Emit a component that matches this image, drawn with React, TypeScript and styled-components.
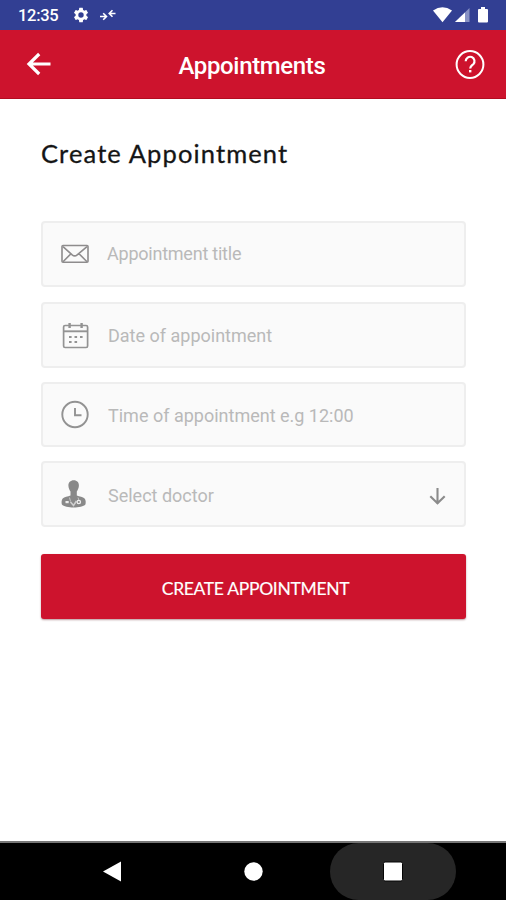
import React from "react";
import styled, { createGlobalStyle } from "styled-components";

const GlobalStyle = createGlobalStyle`
  * { box-sizing: border-box; }
  body { margin: 0; background: #fff; font-family: Roboto, sans-serif; }
  svg { display: block; flex: none; }
`;

const Screen = styled.div`
  width: 506px;
  height: 900px;
  display: flex;
  flex-direction: column;
  overflow: hidden;
  background: #fff;
`;

const StatusBar = styled.div`
  height: 30px;
  padding: 0 16px 0 18px;
  display: flex;
  align-items: center;
  justify-content: space-between;
  background: #323f93;
  color: #fff;
`;

const StatusGroup = styled.div`
  display: flex;
  align-items: center;
`;

const StatusIcons = styled.div`
  display: flex;
  align-items: center;
  gap: 9px;
`;

const Clock = styled.span`
  width: 54px;
  font-size: 16.5px;
  line-height: 20px;
  font-weight: 500;
  letter-spacing: -0.3px;
  padding-top: 2px;
`;

const Header = styled.header`
  height: 69px;
  padding: 0 20px 0 26px;
  display: flex;
  align-items: center;
  justify-content: space-between;
  background: #cd132d;
  border-bottom: 1px solid #b30c20;
`;

const HeaderTitle = styled.h1`
  margin: 3px 4px 0 0;
  color: #fff;
  font-size: 24px;
  line-height: 30px;
  font-weight: 500;
  letter-spacing: -0.35px;
`;

const IconButton = styled.button`
  padding: 0;
  border: 0;
  background: none;
`;

const Content = styled.main`
  flex: 1;
  padding: 38px 40px 0 41px;
`;

const Heading = styled.h2`
  margin: 0 0 51px;
  height: 33px;
  font-family: Lato, sans-serif;
  font-size: 25.5px;
  line-height: 33px;
  font-weight: 400;
  letter-spacing: 1.12px;
  white-space: nowrap;
  color: #151515;
  -webkit-text-stroke: 0.3px #151515;
`;

const Fields = styled.div`
  display: flex;
  flex-direction: column;
`;

const Field = styled.div<{ $height?: number; $gap?: number }>`
  height: ${(p) => p.$height ?? 66}px;
  margin-bottom: ${(p) => p.$gap ?? 14}px;
  padding: 0 16px 0 17px;
  display: flex;
  align-items: center;
  background: #fafafa;
  border: 2px solid #eeeeee;
  border-radius: 4px;
`;

const FieldIcon = styled.span`
  width: 30px;
  display: flex;
`;

const Placeholder = styled.span<{ $indent?: number; $spacing?: number; $drop?: number }>`
  flex: 1;
  margin-left: ${(p) => p.$indent ?? 18}px;
  padding-top: ${(p) => p.$drop ?? 2}px;
  font-size: 18px;
  line-height: 24px;
  letter-spacing: ${(p) => p.$spacing ?? 0}px;
  color: #b9b9b9;
`;

const Submit = styled.button`
  display: block;
  width: 425px;
  height: 65px;
  padding: 4px 0 0 4px;
  border: 0;
  border-radius: 3px;
  background: #cd132d;
  box-shadow: 0 1px 2px rgba(80, 0, 10, 0.4);
  color: #fff;
  font-family: Lato, sans-serif;
  font-size: 17.5px;
  font-weight: 400;
  letter-spacing: -0.32px;
  -webkit-text-stroke: 0.15px #fff;
`;

const NavBar = styled.nav`
  height: 59px;
  padding-left: 49px;
  display: flex;
  align-items: center;
  background: #000;
  border-top: 2px solid #777;
`;

const NavItem = styled.button<{ $active?: boolean }>`
  width: 126px;
  height: 57px;
  margin-right: 14.5px;
  padding: 0;
  border: 0;
  border-radius: 29px;
  display: flex;
  align-items: center;
  justify-content: center;
  background: ${(p) => (p.$active ? "#262626" : "transparent")};
`;

const GearIcon = () => (
  <svg width="18" height="18" viewBox="0 0 24 24" fill="#fff">
    <path d="M19.14 12.94c.04-.3.06-.61.06-.94s-.02-.64-.07-.94l2.03-1.58a.5.5 0 0 0 .12-.61l-1.92-3.32a.5.5 0 0 0-.59-.22l-2.39.96a7 7 0 0 0-1.62-.94L14.4 2.81a.48.48 0 0 0-.48-.41h-3.84a.48.48 0 0 0-.47.41l-.36 2.54a7.3 7.3 0 0 0-1.62.94l-2.39-.96a.48.48 0 0 0-.59.22L2.74 8.87a.48.48 0 0 0 .12.61l2.03 1.58a6.3 6.3 0 0 0 0 1.88l-2.03 1.58a.5.5 0 0 0-.12.61l1.92 3.32c.12.22.37.29.59.22l2.39-.96c.5.38 1.03.7 1.62.94l.36 2.54c.05.24.24.41.48.41h3.84c.24 0 .44-.17.47-.41l.36-2.54a7.3 7.3 0 0 0 1.62-.94l2.39.96c.22.08.47 0 .59-.22l1.92-3.32a.48.48 0 0 0-.12-.61zM12 15.6A3.6 3.6 0 1 1 12 8.4a3.6 3.6 0 0 1 0 7.2z" />
  </svg>
);

const ConvergeIcon = () => (
  <svg width="18" height="16" viewBox="0 0 18 16" fill="none" stroke="#fff" strokeWidth="1.6">
    <path d="M1 9.500h6M4.200 6.200l3.300 3.300-3.300 3.300M16.500 6.500h-6M13.500 3.200L10.200 6.500l3.300 3.300" />
  </svg>
);

const SignalIcons = () => (
  <svg width="60" height="20" viewBox="0 0 60 20">
    <path d="M3 5.5Q12.500-1 22 5.500L12.500 17.200Z" fill="#fff" />
    <path d="M39.500 3V17H25Z" fill="#8791c4" />
    <path d="M35 7.500V17H25Z" fill="#fff" />
    <path d="M49 4h2V2h4v2h2q1 0 1 1v11.500q0 1-1 1h-8q-1 0-1-1V5q0-1 1-1z" fill="#fff" />
  </svg>
);

const BackArrow = () => (
  <svg width="28" height="24" viewBox="0 0 28 24" fill="none" stroke="#fff" strokeWidth="3.200">
    <path d="M24.500 12H3.500M13.200 2L3 12l10.200 10" />
  </svg>
);

const HelpIcon = () => (
  <svg width="32" height="32" viewBox="0 0 32 32" fill="none" stroke="#fff" strokeWidth="2">
    <circle cx="16" cy="16.500" r="13.400" />
    <path d="M11.700 13.200a4.400 4.400 0 1 1 7.600 3c-1.800 1.600-3.100 2.300-3.100 4.200" strokeWidth="2.200" />
    <path d="M16.200 22v2.400" strokeWidth="2.400" />
  </svg>
);

const EnvelopeIcon = () => (
  <svg width="30" height="24" viewBox="0 0 30 24" fill="none" stroke="#8e8c8d" strokeWidth="1.600">
    <rect x="2" y="3.500" width="26" height="16.800" rx="1" />
    <path d="M3 4.700l9.200 8.200q2.500 2.100 5 0L27 4.700M3 19.700l8-8M27 19.700l-8-8" />
  </svg>
);

const CalendarIcon = () => (
  <svg width="30" height="28" viewBox="0 0 30 28" fill="none" stroke="#939393" strokeWidth="1.700">
    <rect x="3.600" y="4.500" width="24" height="22" rx="1.500" />
    <path d="M3.600 10.300h24" strokeWidth="1.900" />
    <path d="M9.600 2v5M21.600 2v5" strokeWidth="2.400" />
    <path d="M9 16h2.600M14.500 16h2.600M20 16h2.600M9 21h2.600M14.500 21h2.600" strokeWidth="2.200" />
  </svg>
);

const ClockIcon = () => (
  <svg width="30" height="30" viewBox="0 0 30 30" fill="none" stroke="#929292" strokeWidth="1.900">
    <circle cx="15" cy="14.500" r="12.700" />
    <path d="M15 8V15.300H21.500" strokeWidth="1.900" />
  </svg>
);

const DoctorIcon = () => (
  <svg width="30" height="30" viewBox="0 0 30 30">
    <path d="M13.800 1.300c3.300 0 5.200 2.300 5.100 5.400-.1 2.400-1.300 4.400-2.100 5.900v3.900c2.600 1.100 6.300 1.400 7.800 3 1.200 1.300 1.400 4 .8 6-3.300 4-20.200 4-23.500 0-.6-2-.4-4.700.8-6 1.500-1.600 5.200-1.900 7.800-3v-3.900c-.9-1.500-2-3.500-2.100-5.900-.1-3.100 2-5.400 5.400-5.400Z" fill="#898989" />
    <path d="M9.500 18.500l1 4M18 18.500l1 3" fill="none" stroke="#c5c5c5" />
    <circle cx="18.800" cy="23" r="1.700" fill="none" stroke="#eee" strokeWidth="1.300" />
    <path d="M5.500 22h3.200v2.200H5.500z" fill="#ececec" />
    <path d="M10.500 23l3 3.500 3-4.500" fill="none" stroke="#cfcfcf" strokeWidth="1.600" />
  </svg>
);

const DownArrow = () => (
  <svg width="20" height="24" viewBox="0 0 20 24" fill="none" stroke="#8b8b8b" strokeWidth="2.100">
    <path d="M9.500 6v16M2.300 14.300l7.200 7 7.200-7" />
  </svg>
);

export default function App() {
  return (
    <>
      <GlobalStyle />
      <Screen>
        <StatusBar>
          <StatusGroup>
            <Clock>12:35</Clock>
            <StatusIcons>
              <GearIcon />
              <ConvergeIcon />
            </StatusIcons>
          </StatusGroup>
          <SignalIcons />
        </StatusBar>
        <Header>
          <IconButton aria-label="Back"><BackArrow /></IconButton>
          <HeaderTitle>Appointments</HeaderTitle>
          <IconButton aria-label="Help"><HelpIcon /></IconButton>
        </Header>
        <Content>
          <Heading>Create Appointment</Heading>
          <Fields>
            <Field $gap={15}>
              <FieldIcon><EnvelopeIcon /></FieldIcon>
              <Placeholder $indent={17} $spacing={-0.23} $drop={0}>Appointment title</Placeholder>
            </Field>
            <Field>
              <FieldIcon><CalendarIcon /></FieldIcon>
              <Placeholder>Date of appointment</Placeholder>
            </Field>
            <Field $height={65}>
              <FieldIcon><ClockIcon /></FieldIcon>
              <Placeholder>Time of appointment e.g 12:00</Placeholder>
            </Field>
            <Field $gap={27}>
              <FieldIcon><DoctorIcon /></FieldIcon>
              <Placeholder $drop={3}>Select doctor</Placeholder>
              <DownArrow />
            </Field>
          </Fields>
          <Submit>CREATE APPOINTMENT</Submit>
        </Content>
        <NavBar>
          <NavItem aria-label="Back">
            <svg width="20" height="22" viewBox="0 0 20 22" fill="#fff"><path d="M1 10.500L19 .5v20z" /></svg>
          </NavItem>
          <NavItem aria-label="Home">
            <svg width="20" height="20" viewBox="0 0 20 20" fill="#fff"><circle cx="10.500" cy="9.500" r="9.200" /></svg>
          </NavItem>
          <NavItem $active aria-label="Recent apps">
            <svg width="22" height="22" viewBox="0 0 22 22"><rect x="1.500" y="1" width="19" height="19" rx="1.500" fill="#fff" stroke="#050505" /></svg>
          </NavItem>
        </NavBar>
      </Screen>
    </>
  );
}
